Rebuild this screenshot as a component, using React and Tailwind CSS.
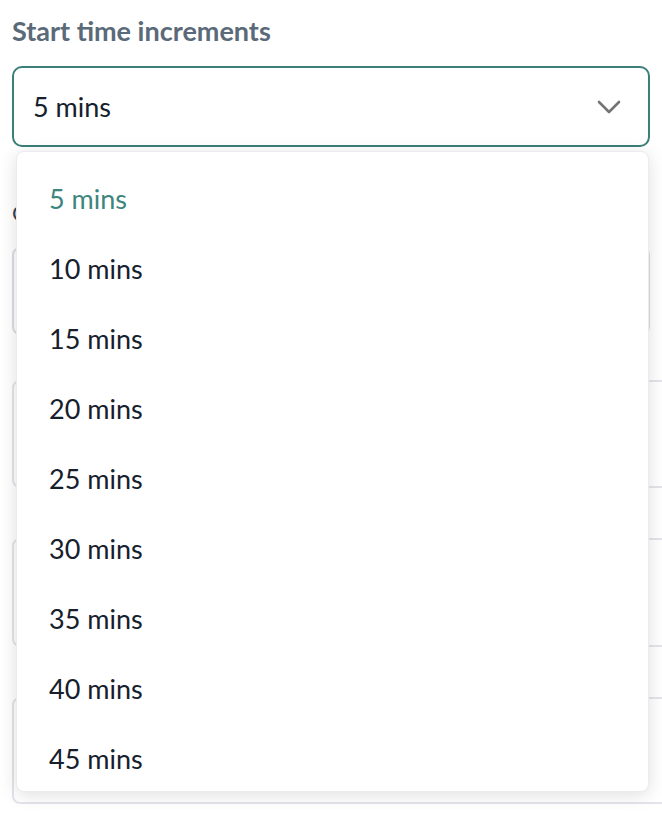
const options = [5, 10, 15, 20, 25, 30, 35, 40, 45];

function Chevron() {
  return (
    <svg width="26" height="16" viewBox="0 0 26 16" fill="none">
      <path d="M3 3 L13 13 L23 3" stroke="#747474" strokeWidth="2.6" strokeLinecap="round" strokeLinejoin="round" />
    </svg>
  );
}

export default function App() {
  const selected = 5;

  return (
    <div className="relative h-[816px] w-full overflow-hidden bg-white font-['Lato','Noto_Sans',sans-serif]">
      {/* Form underneath */}
      <div className="px-3 pt-[16px]">
        <label className="block text-[27px] font-bold leading-[30px] text-[#5a6a79]">
          Start time increments
        </label>
        <button className="mt-[20px] flex h-[81px] w-full items-center justify-between rounded-[10px] border-2 border-[#3b7f79] bg-white pl-[19px] pr-[26px] text-left">
          <span className="text-[27px] leading-none text-[#16202c]">5 mins</span>
          <Chevron />
        </button>

        <label className="mt-[51px] block text-[22px] font-normal leading-[30px] text-[#3a4452]">
          Cut-off time
        </label>
        <div className="mt-[19px] h-[88px] w-full rounded-[8px] border-2 border-[#dcdce2]" />

        <div className="mt-[45px] h-[108px] w-[720px] rounded-[8px] border-2 border-[#e4e4ea]" />
        <div className="mt-[50px] h-[109px] w-[720px] rounded-[8px] border-2 border-[#e4e4ea]" />
        <div className="mt-[50px] h-[107px] w-[720px] rounded-[8px] border-2 border-[#e4e4ea]" />
      </div>

      {/* Open dropdown menu */}
      <ul className="absolute left-[16px] top-[151px] h-[641px] w-[633px] overflow-hidden rounded-[8px] border border-[#ececf0] bg-white pt-[11px] shadow-[0_3px_18px_rgba(0,0,0,0.13)]">
        {options.map((m) => (
          <li
            key={m}
            className={`flex h-[70px] items-center pl-[32px] text-[27px] leading-none ${
              m === selected ? "text-[#3d857d]" : "text-[#16202c]"
            }`}
          >
            {m} mins
          </li>
        ))}
      </ul>
    </div>
  );
}
